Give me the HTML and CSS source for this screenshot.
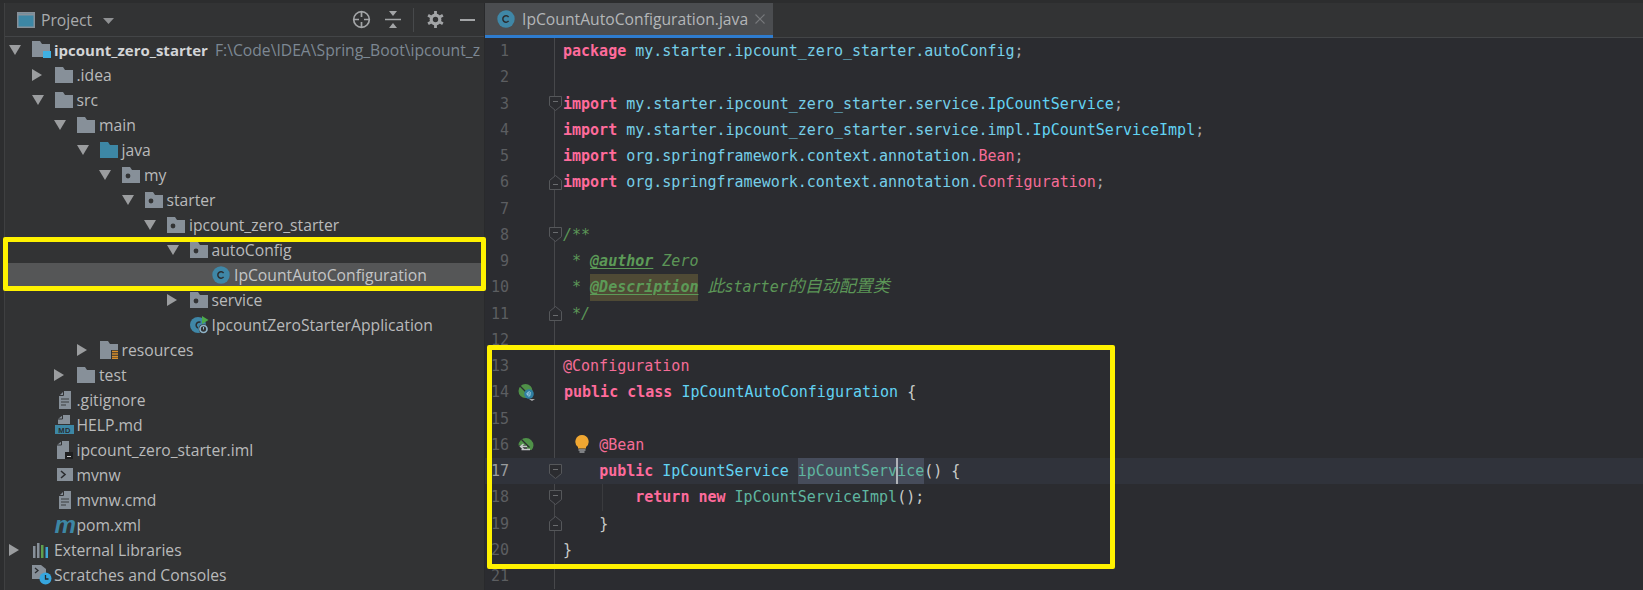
FILE: index.html
```html
<!DOCTYPE html>
<html lang="en">
<head>
<meta charset="utf-8">
<title>IpCountAutoConfiguration.java</title>
<link rel="stylesheet" href="styles.css">
</head>
<body>
<svg class="defs" width="0" height="0" aria-hidden="true">
  <symbol id="down" viewBox="0 0 12 10"><path d="M0 0h12L6 10z" fill="#9b9d9f"/></symbol>
  <symbol id="right" viewBox="0 0 10 12"><path d="M0 0l10 6-10 6z" fill="#9b9d9f"/></symbol>
  <symbol id="folder" viewBox="0 0 18 16"><path d="M0 0h8l2 3h8v13H0z" fill="#879099"/></symbol>
  <symbol id="java" viewBox="0 0 18 16"><path d="M0 0h8l2 3h8v13H0z" fill="#3d87a5"/></symbol>
  <symbol id="pkg" viewBox="0 0 18 16"><path d="M0 0h8l2 3h8v13H0z" fill="#879099"/><circle cx="6" cy="9" r="2.400" fill="#323334"/></symbol>
  <symbol id="res" viewBox="0 0 18 18"><path d="M0 0h8l2 3h8v6h-7v9H0z" fill="#879099"/><path d="M12 10.500h6M12 13h6M12 15.500h6M12 17.500h6" stroke="#d98f2b" stroke-width="1.300"/></symbol>
  <symbol id="module" viewBox="0 0 20 18"><path d="M0 0h8l2 3h8v7h-7v6H0z" fill="#879099"/><rect x="11" y="10" width="8" height="7" fill="#3fb0e2"/></symbol>
  <symbol id="cls" viewBox="0 0 18 18"><circle cx="9" cy="9" r="8.700" fill="#3f87a7"/><path d="M11.600 7.100A3.200 3.200 0 1 0 11.600 10.900" fill="none" stroke="#2b2d30" stroke-width="1.500"/></symbol>
  <symbol id="app" viewBox="0 0 19 18"><circle cx="8" cy="9" r="8" fill="#3f87a7"/><path d="M10.500 6.300A3 3 0 1 0 8 12" fill="none" stroke="#2b2d30" stroke-width="1.500"/><path d="M12 0l6.500 4L12 8z" fill="#4dab4a"/><circle cx="13.500" cy="13" r="4.800" fill="#323334"/><circle cx="13.500" cy="13" r="3.500" fill="none" stroke="#8fb3c7" stroke-width="1.700"/><path d="M13.500 11v2.500" stroke="#8fb3c7"/></symbol>
  <symbol id="file" viewBox="0 0 14 18"><path d="M6 0h7v18H1V5z" fill="#879099"/><path d="M3 8h8M3 11h8M3 14h5" stroke="#3b3d3f" stroke-width="1.200"/><path d="M5.500 0v4.500H1" fill="none" stroke="#323334"/></symbol>
  <symbol id="iml" viewBox="0 0 16 18"><path d="M5 0h7v18H0V4z" fill="#879099"/><path d="M4.500 0v4H0" fill="none" stroke="#323334"/><rect x="8" y="11" width="8" height="7" fill="#1f2021"/><path d="M10 15.500h4" stroke="#c6c8ca"/></symbol>
  <symbol id="sh" viewBox="0 0 16 13"><rect width="16" height="13" fill="#879099"/><path d="M4 3l4 3.500L4 10" fill="none" stroke="#2b2d30" stroke-width="1.600"/></symbol>
  <symbol id="libs" viewBox="0 0 18 16"><path d="M1 4h2.500v12H1z" fill="#879099"/><path d="M5 1h2.500v15H5z" fill="#879099"/><path d="M9 3h2.500v13H9z" fill="#5fa04e"/><path d="M13.500 5H16v11h-2.500z" fill="#3fa6d6"/></symbol>
  <symbol id="scratch" viewBox="0 0 20 20"><path d="M0 0h9l5 4v7H8v3H0z" fill="#879099"/><path d="M3 3l3 2.500L3 8" fill="none" stroke="#2b2d30" stroke-width="1.300"/><circle cx="13.500" cy="13.500" r="6" fill="#36a6de"/><path d="M13.500 10v4h3" fill="none" stroke="#25282a" stroke-width="1.300"/></symbol>
  <symbol id="fold-d" viewBox="0 0 13 15"><path d="M.5.500h12v9l-6 5-6-5z" fill="#2b2c30" stroke="#55575a"/><path d="M4 5.500h5" stroke="#6a6c6f"/></symbol>
  <symbol id="fold-u" viewBox="0 0 13 15"><path d="M.5 14.500h12v-9l-6-5-6 5z" fill="#2b2c30" stroke="#55575a"/><path d="M4 9.500h5" stroke="#6a6c6f"/></symbol>
</svg>

<div class="page">
  <div class="rail"></div>

  <aside class="side">
    <header class="side-head">
      <svg class="win" width="18" height="16" viewBox="0 0 18 16"><rect x=".75" y=".75" width="16.500" height="14.500" fill="#3d87a5" stroke="#879099" stroke-width="1.500"/><path d="M1 2.500h16" stroke="#879099" stroke-width="2"/></svg>
      <span class="side-title">Project</span>
      <svg class="caret-down" width="11" height="6" viewBox="0 0 11 6"><path d="M0 0h11L5.500 6z" fill="#8f9193"/></svg>
      <span class="head-spacer"></span>
      <svg class="tool t-target" width="19" height="19" viewBox="0 0 19 19" fill="none" stroke="#a3a5a7" stroke-width="1.700"><circle cx="9.500" cy="9.500" r="7.800"/><path d="M9.500 1.500v5.500M9.500 12v5.500M1.500 9.500H7M12 9.500h5.500"/></svg>
      <svg class="tool t-collapse" width="16" height="17" viewBox="0 0 16 17"><path d="M0 8.500h16" stroke="#a3a5a7" stroke-width="1.500"/><path d="M4 0h8L8 5zM4 17h8l-4-5z" fill="#a3a5a7"/></svg>
      <span class="tool-sep"></span>
      <svg class="tool t-gear" width="17" height="17" viewBox="0 0 17 17"><circle cx="8.500" cy="8.500" r="4.300" fill="none" stroke="#a3a5a7" stroke-width="3.200"/><path d="M8.500 0v17M1.100 4.250l14.800 8.500M1.100 12.750l14.800-8.500" stroke="#a3a5a7" stroke-width="2.800" stroke-dasharray="3 11"/></svg>
      <svg class="tool t-min" width="15" height="2" viewBox="0 0 15 2"><path d="M0 1h15" stroke="#a3a5a7" stroke-width="2"/></svg>
    </header>

    <ul class="tree">
      <li class="row l0"><svg class="arrow" width="12" height="10"><use href="#down"/></svg><svg class="ico" width="20" height="18"><use href="#module"/></svg><span class="root-name">ipcount_zero_starter</span><span class="root-path">F:\Code\IDEA\Spring_Boot\ipcount_z</span></li>
      <li class="row l1"><svg class="arrow" width="10" height="12"><use href="#right"/></svg><svg class="ico" width="18" height="16"><use href="#folder"/></svg>.idea</li>
      <li class="row l1"><svg class="arrow" width="12" height="10"><use href="#down"/></svg><svg class="ico" width="18" height="16"><use href="#folder"/></svg>src</li>
      <li class="row l2"><svg class="arrow" width="12" height="10"><use href="#down"/></svg><svg class="ico" width="18" height="16"><use href="#folder"/></svg>main</li>
      <li class="row l3"><svg class="arrow" width="12" height="10"><use href="#down"/></svg><svg class="ico" width="18" height="16"><use href="#java"/></svg>java</li>
      <li class="row l4"><svg class="arrow" width="12" height="10"><use href="#down"/></svg><svg class="ico" width="18" height="16"><use href="#pkg"/></svg>my</li>
      <li class="row l5"><svg class="arrow" width="12" height="10"><use href="#down"/></svg><svg class="ico" width="18" height="16"><use href="#pkg"/></svg>starter</li>
      <li class="row l6"><svg class="arrow" width="12" height="10"><use href="#down"/></svg><svg class="ico" width="18" height="16"><use href="#pkg"/></svg>ipcount_zero_starter</li>
      <li class="row l7"><svg class="arrow" width="12" height="10"><use href="#down"/></svg><svg class="ico" width="18" height="16"><use href="#pkg"/></svg>autoConfig</li>
      <li class="row l8 selected"><span class="arrow-gap"></span><svg class="ico" width="18" height="18"><use href="#cls"/></svg>IpCountAutoConfiguration</li>
      <li class="row l7"><svg class="arrow" width="10" height="12"><use href="#right"/></svg><svg class="ico" width="18" height="16"><use href="#pkg"/></svg>service</li>
      <li class="row l7"><span class="arrow-gap"></span><svg class="ico" width="19" height="18"><use href="#app"/></svg>IpcountZeroStarterApplication</li>
      <li class="row l3"><svg class="arrow" width="10" height="12"><use href="#right"/></svg><svg class="ico" width="18" height="18"><use href="#res"/></svg>resources</li>
      <li class="row l2"><svg class="arrow" width="10" height="12"><use href="#right"/></svg><svg class="ico" width="18" height="16"><use href="#folder"/></svg>test</li>
      <li class="row l1"><span class="arrow-gap"></span><svg class="ico ico-file" width="14" height="18"><use href="#file"/></svg>.gitignore</li>
      <li class="row l1"><span class="arrow-gap"></span><svg class="ico" width="19" height="19" viewBox="0 0 19 19"><path d="M8 0h7v9H3V4z" fill="#879099"/><path d="M7.500 0v4H3" fill="none" stroke="#323334"/><rect y="10" width="19" height="9" fill="#3d87a5"/><text x="9.500" y="17.500" class="md-text">MD</text></svg>HELP.md</li>
      <li class="row l1"><span class="arrow-gap"></span><svg class="ico ico-file" width="16" height="18"><use href="#iml"/></svg>ipcount_zero_starter.iml</li>
      <li class="row l1"><span class="arrow-gap"></span><svg class="ico ico-file" width="16" height="13"><use href="#sh"/></svg>mvnw</li>
      <li class="row l1"><span class="arrow-gap"></span><svg class="ico ico-file" width="14" height="18"><use href="#file"/></svg>mvnw.cmd</li>
      <li class="row l1"><span class="arrow-gap"></span><span class="ico pom-m">m</span>pom.xml</li>
      <li class="row l0"><svg class="arrow" width="10" height="12"><use href="#right"/></svg><svg class="ico" width="18" height="16"><use href="#libs"/></svg>External Libraries</li>
      <li class="row l0"><span class="arrow-gap"></span><svg class="ico" width="20" height="20"><use href="#scratch"/></svg>Scratches and Consoles</li>
    </ul>
  </aside>

  <main class="editor">
    <nav class="tabs">
      <div class="tab">
        <svg width="18" height="18"><use href="#cls"/></svg>
        <span class="tab-name">IpCountAutoConfiguration.java</span>
        <svg class="tab-x" width="10" height="10" viewBox="0 0 10 10"><path d="M.5.500l9 9M9.500.500l-9 9" stroke="#77797c" stroke-width="1.100"/></svg>
      </div>
    </nav>

    <div class="code">
      <div class="line"><span class="num">1</span><span class="mark"></span><span class="fold"></span><code><b>package</b> <i class="pk">my.starter.ipcount_zero_starter.autoConfig</i><i class="pn">;</i></code></div>
      <div class="line"><span class="num">2</span><span class="mark"></span><span class="fold"></span><code></code></div>
      <div class="line"><span class="num">3</span><span class="mark"></span><span class="fold"><svg width="13" height="15"><use href="#fold-d"/></svg></span><code><b>import</b> <i class="pk">my.starter.ipcount_zero_starter.service.</i><i class="ty">IpCountService</i><i class="pn">;</i></code></div>
      <div class="line"><span class="num">4</span><span class="mark"></span><span class="fold"></span><code><b>import</b> <i class="pk">my.starter.ipcount_zero_starter.service.impl.</i><i class="ty">IpCountServiceImpl</i><i class="pn">;</i></code></div>
      <div class="line"><span class="num">5</span><span class="mark"></span><span class="fold"></span><code><b>import</b> <i class="pk">org.springframework.context.annotation.</i><i class="an">Bean</i><i class="pn">;</i></code></div>
      <div class="line"><span class="num">6</span><span class="mark"></span><span class="fold"><svg width="13" height="15"><use href="#fold-u"/></svg></span><code><b>import</b> <i class="pk">org.springframework.context.annotation.</i><i class="an">Configuration</i><i class="pn">;</i></code></div>
      <div class="line"><span class="num">7</span><span class="mark"></span><span class="fold"></span><code></code></div>
      <div class="line"><span class="num">8</span><span class="mark"></span><span class="fold"><svg width="13" height="15"><use href="#fold-d"/></svg></span><code><em>/**</em></code></div>
      <div class="line"><span class="num">9</span><span class="mark"></span><span class="fold"></span><code><em> * <u>@author</u> Zero</em></code></div>
      <div class="line"><span class="num">10</span><span class="mark"></span><span class="fold"></span><code><em> * <u class="warn">@Description</u> <span class="cjk">此</span>starter<span class="cjk">的自动配置类</span></em></code></div>
      <div class="line"><span class="num">11</span><span class="mark"></span><span class="fold"><svg width="13" height="15"><use href="#fold-u"/></svg></span><code><em> */</em></code></div>
      <div class="line"><span class="num">12</span><span class="mark"></span><span class="fold"></span><code></code></div>
      <div class="line"><span class="num">13</span><span class="mark"></span><span class="fold"></span><code><i class="an">@Configuration</i></code></div>
      <div class="line"><span class="num">14</span><span class="mark"><svg width="17" height="18" viewBox="0 0 17 18"><path d="M7.500 1A7 7 0 1 0 7.500 15A7 7 0 0 0 14.500 8 7 7 0 0 0 7.500 1z" fill="#4f9148"/><path d="M2 3l10 10" stroke="#2b2c30" stroke-width="1.300"/><circle cx="11" cy="11" r="4.800" fill="#2f7fa3"/><path d="M9 11h4M12.800 10a2 2 0 1 0-.5 2.500" fill="none" stroke="#a9d3e3"/><path d="M11 16h6l-3 2z" fill="#a6a8aa"/></svg></span><span class="fold"></span><code><b>public class</b> <i class="decl">IpCountAutoConfiguration</i> <i class="br">{</i></code></div>
      <div class="line"><span class="num">15</span><span class="mark"></span><span class="fold"></span><code></code></div>
      <div class="line"><span class="num">16</span><span class="mark"><svg width="16" height="15" viewBox="0 0 16 15"><path d="M.5 8.500A7.500 7.500 0 0 1 15.500 8.500a7 7 0 0 1-2 4.500H9V8.500z" fill="#4f9148"/><path d="M3.500 2.500l8 8" stroke="#2b2c30" stroke-width="1.200"/><path d="M9 9.500H3M5.500 7L2.500 9.500l3 2.500M3.500 12.500H12" fill="none" stroke="#c6c8ca" stroke-width="1.400"/></svg></span><span class="fold"></span><code><svg class="bulb" width="14" height="18" viewBox="0 0 14 18"><path d="M7 0a6.700 6.700 0 0 1 4 12v1.500H3V12A6.700 6.700 0 0 1 7 0z" fill="#f0a732"/><path d="M3.500 15h7M4.500 17h5" stroke="#9a9c9e" stroke-width="1.400"/></svg>    <i class="an">@Bean</i></code></div>
      <div class="line current"><span class="num">17</span><span class="mark"></span><span class="fold"><svg width="13" height="15"><use href="#fold-d"/></svg></span><code>    <b>public</b> <i class="decl">IpCountService</i> <span class="sel">ipCountServ<span class="caret"></span>ice</span><i class="br">() {</i></code></div>
      <div class="line"><span class="num">18</span><span class="mark"></span><span class="fold"><svg width="13" height="15"><use href="#fold-d"/></svg></span><code class="guide">        <b>return new</b> <i class="me">IpCountServiceImpl</i><i class="br">();</i></code></div>
      <div class="line"><span class="num">19</span><span class="mark"></span><span class="fold"><svg width="13" height="15"><use href="#fold-u"/></svg></span><code>    <i class="br">}</i></code></div>
      <div class="line"><span class="num">20</span><span class="mark"></span><span class="fold"></span><code><i class="br">}</i></code></div>
      <div class="line"><span class="num">21</span><span class="mark"></span><span class="fold"></span><code></code></div>
    </div>
  </main>

  <div class="callout callout-tree"></div>
  <div class="callout callout-code"></div>
</div>
</body>
</html>
```

FILE: styles.css
```css
* { box-sizing: border-box; }

html, body {
  margin: 0;
  padding: 0;
  background: #2b2c30;
}

.defs { position: absolute; }

.md-text {
  font: 700 7.5px "Liberation Sans", sans-serif;
  fill: #2a2c2e;
  text-anchor: middle;
  letter-spacing: .3px;
}

.page {
  position: relative;
  display: flex;
  width: 1643px;
  height: 590px;
  overflow: hidden;
  border-top: 3px solid #2c2d2e;
}

.rail {
  flex: 0 0 5px;
  background: #2d2e2f;
  border-right: 1px solid #3f4041;
}

/* Project tool window */
.side {
  flex: 0 0 480px;
  min-width: 0;
  background: #323334;
  border-right: 1px solid #292a2c;
  font: 15.7px "Open Sans", "Liberation Sans", sans-serif;
  color: #b9babb;
  overflow: hidden;
}

.side-head {
  display: flex;
  align-items: center;
  height: 34px;
  padding: 0 9px 0 12px;
  border-bottom: 1px solid #434547;
}

.side-title { margin-left: 6px; color: #a9abad; }
.caret-down { margin-left: 11px; margin-top: 2px; }
.head-spacer { flex: 1; }
.tool { flex: none; }
.t-collapse { margin-left: 14px; }
.t-gear { margin-left: 13px; }
.t-min { margin-left: 16px; }
.tool-sep { width: 1px; height: 24px; margin-left: 12px; background: #47494b; }

.tree {
  list-style: none;
  margin: 1px 0 0;
  padding: 0;
}

.row {
  display: flex;
  align-items: center;
  height: 25px;
  padding-bottom: 2px;
  white-space: nowrap;
}

.l0 { padding-left: 4px; }
.l1 { padding-left: 26.5px; }
.l2 { padding-left: 49px; }
.l3 { padding-left: 71.5px; }
.l4 { padding-left: 94px; }
.l5 { padding-left: 116.5px; }
.l6 { padding-left: 139px; }
.l7 { padding-left: 161.5px; }
.l8 { padding-left: 184px; }

.selected { background: #555657; color: #c4c5c6; }

.arrow { flex: none; margin-right: 11px; }
.arrow[width="10"] { margin-right: 13px; }
.arrow-gap { flex: none; width: 23px; }

.ico { flex: none; margin-right: 4px; }
.ico[width="20"] { margin-right: 2px; }
.ico[width="19"] { margin-right: 3px; }
.ico-file { margin-left: 3px; margin-right: 5px; }
.ico-file[width="16"] { margin-left: 2px; margin-right: 4px; }

.pom-m {
  width: 18px;
  color: #3d87a5;
  font: italic 900 23px/20px "Liberation Sans", sans-serif;
  text-align: center;
  transform: scaleX(1.05);
}

.root-name { font-size: 15px; font-weight: 700; color: #d3d5d7; }
.root-path { margin-left: 7px; color: #7d8893; }

/* Editor */
.editor {
  flex: 1;
  min-width: 0;
  background: #2b2c30;
}

.tabs {
  height: 35px;
  background: #323334;
  border-bottom: 1px solid #434547;
}

.tab {
  display: flex;
  align-items: center;
  width: 288px;
  height: 35px;
  padding: 0 0 1px 12px;
  background: #4b4d50;
  border-bottom: 3px solid #2e7ccf;
  font: 15.7px "Open Sans", "Liberation Sans", sans-serif;
  color: #b4b6b8;
}

.tab-name { margin-left: 7px; }
.tab-x { margin-left: 7px; }

.code {
  position: relative;
  font: 15px/26.25px "DejaVu Sans Mono", "Liberation Mono", monospace;
  color: #76cfe8;
}

.code::before {
  content: "";
  position: absolute;
  left: 69px;
  top: 0;
  bottom: 0;
  width: 1px;
  background: #47484b;
}

.line {
  position: relative;
  display: flex;
  height: 26.25px;
}

.current { background: #30333b; }

.num {
  flex: 0 0 24px;
  text-align: right;
  color: #5c5e61;
}

.current .num { color: #9a9c9e; }

.mark {
  flex: 0 0 25px;
  display: flex;
  align-items: center;
  padding-left: 9px;
}

.fold {
  flex: 0 0 14px;
  display: flex;
  align-items: center;
  margin-left: 15px;
  z-index: 1;
}

code {
  position: relative;
  font: inherit;
  white-space: pre;
  flex: 1;
}

code i { font-style: normal; }

code b { color: #ff6b9b; font-weight: 700; }
.pk { color: #76cfe8; }
.ty { color: #62d3f3; }
.an { color: #f56c97; }
.decl { color: #62d3f3; }
.me { color: #5fb6a0; }
.pn { color: #a9abad; }
.br { color: #c9ccca; }

code em { color: #5c9657; font-style: italic; }
code u { font-weight: 700; color: #5c9a57; text-underline-offset: 2px; }
.warn { display: inline-block; height: 26.25px; background: #4f4a35; }
.cjk { font-family: "Noto Sans CJK SC", sans-serif; font-size: 17px; line-height: 1; }

.sel {
  display: inline-block;
  height: 26.25px;
  background: #464c5b;
  color: #5fb6a0;
}

.caret {
  position: relative;
}

.caret::after {
  content: "";
  position: absolute;
  left: -1px;
  top: -4px;
  width: 2px;
  height: 26px;
  background: #b0b3b8;
}

.bulb {
  position: absolute;
  left: 12px;
  top: 3px;
}

.guide::before {
  content: "";
  position: absolute;
  left: 39px;
  top: 0;
  bottom: 0;
  width: 1px;
  background: #3a3b3e;
}

/* Yellow annotations */
.callout {
  position: absolute;
  border: 5px solid #fff200;
  border-radius: 2px;
  pointer-events: none;
  z-index: 2;
}

.callout-tree { left: 3px; top: 234px; width: 483px; height: 54px; }
.callout-code { left: 487px; top: 342px; width: 628px; height: 224px; }
```
